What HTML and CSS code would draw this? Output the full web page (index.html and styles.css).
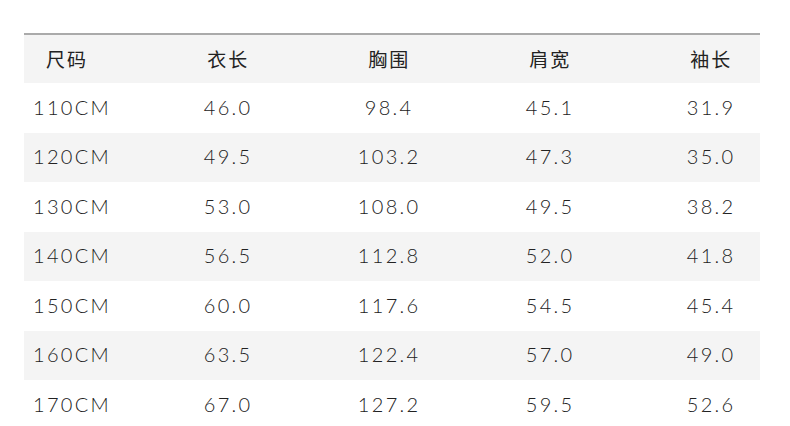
FILE: index.html
```html
<!DOCTYPE html>
<html lang="zh">
<head>
<meta charset="utf-8">
<link rel="stylesheet" href="styles.css">
</head>
<body>
<div class="table">
  <div class="row head">
    <div class="cell first">尺码</div><div class="cell">衣长</div><div class="cell">胸围</div><div class="cell">肩宽</div><div class="cell">袖长</div>
  </div>
  <div class="row">
    <div class="cell first">110CM</div><div class="cell">46.0</div><div class="cell">98.4</div><div class="cell">45.1</div><div class="cell">31.9</div>
  </div>
  <div class="row alt">
    <div class="cell first">120CM</div><div class="cell">49.5</div><div class="cell">103.2</div><div class="cell">47.3</div><div class="cell">35.0</div>
  </div>
  <div class="row">
    <div class="cell first">130CM</div><div class="cell">53.0</div><div class="cell">108.0</div><div class="cell">49.5</div><div class="cell">38.2</div>
  </div>
  <div class="row alt">
    <div class="cell first">140CM</div><div class="cell">56.5</div><div class="cell">112.8</div><div class="cell">52.0</div><div class="cell">41.8</div>
  </div>
  <div class="row">
    <div class="cell first">150CM</div><div class="cell">60.0</div><div class="cell">117.6</div><div class="cell">54.5</div><div class="cell">45.4</div>
  </div>
  <div class="row alt">
    <div class="cell first">160CM</div><div class="cell">63.5</div><div class="cell">122.4</div><div class="cell">57.0</div><div class="cell">49.0</div>
  </div>
  <div class="row">
    <div class="cell first">170CM</div><div class="cell">67.0</div><div class="cell">127.2</div><div class="cell">59.5</div><div class="cell">52.6</div>
  </div>
</div>
</body>
</html>
```

FILE: styles.css
```css
html, body {
  margin: 0;
  padding: 0;
  background: #ffffff;
}
body {
  width: 790px;
  height: 426px;
  overflow: hidden;
  font-family: "Lato", "Noto Sans CJK SC", sans-serif;
  color: #222222;
}
.table {
  margin: 33px 30px 0 24px;
  border-top: 2px solid #aaaaaa;
}
.row {
  display: grid;
  grid-template-columns: 92px repeat(4, 100px);
  column-gap: 61px;
  height: 49.5px;
  box-sizing: border-box;
  padding-bottom: 2px;
  align-items: center;
  font-size: 20px;
  font-weight: 300;
  letter-spacing: 2.3px;
}
.row.head {
  height: 48px;
  background: #f4f4f4;
  font-family: "Noto Sans CJK SC", sans-serif;
  font-weight: 400;
  font-size: 19px;
  letter-spacing: 2px;
  color: #222222;
}
.row.alt {
  background: #f4f4f4;
}
.cell {
  text-align: center;
  white-space: nowrap;
  margin-right: -2.3px;
}
.cell.first {
  text-align: left;
  padding-left: 9px;
}
.head .cell.first {
  padding-left: 22px;
}
```
